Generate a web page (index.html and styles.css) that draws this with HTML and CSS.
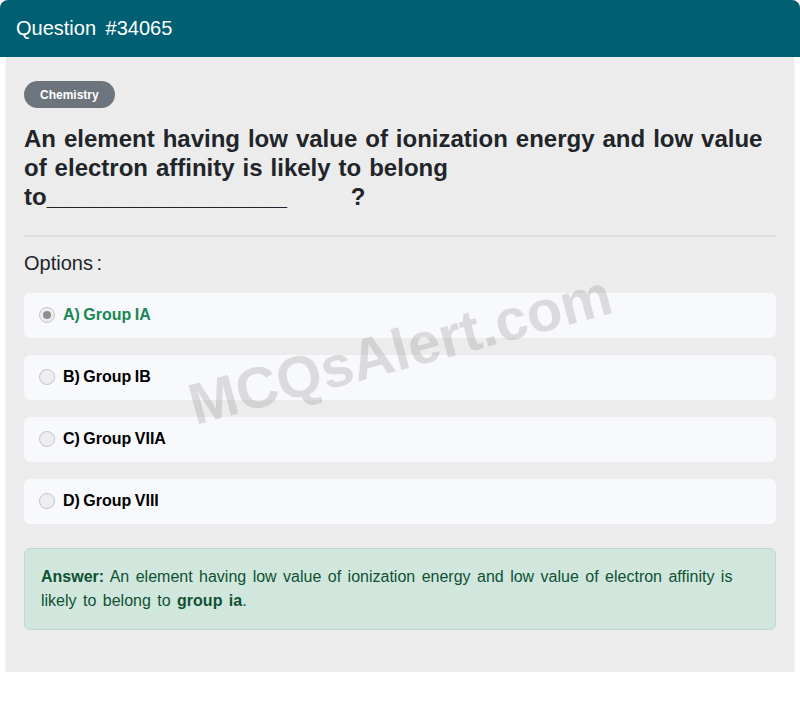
FILE: index.html
```html
<!DOCTYPE html>
<html>
<head>
<meta charset="utf-8">
<link rel="stylesheet" href="styles.css">
</head>
<body>
<div class="card">
  <div class="card-header">Question <span class="qnum">#34065</span></div>
  <div class="card-body">
    <span class="badge">Chemistry</span>
    <h2 class="question">An element having low value of ionization energy and low value of electron affinity is likely to belong to__________________&nbsp;&nbsp;&nbsp;&nbsp;&nbsp;&nbsp;&nbsp;&nbsp;?</h2>
    <hr class="divider">
    <div class="options-title">Options :</div>
    <div class="option correct"><span class="radio checked"></span>A) Group IA</div>
    <div class="option"><span class="radio"></span>B) Group IB</div>
    <div class="option"><span class="radio"></span>C) Group VIIA</div>
    <div class="option"><span class="radio"></span>D) Group VIII</div>
    <div class="answer"><strong>Answer:</strong> An element having low value of ionization energy and low value of electron affinity is likely to belong to <strong>group ia</strong>.</div>
    <div class="watermark">MCQsAlert.com</div>
  </div>
</div>
</body>
</html>
```
FILE: styles.css
```css
html, body {
  margin: 0;
  padding: 0;
  background: #ffffff;
  font-family: "Liberation Sans", Arial, sans-serif;
  color: #212529;
}
.card {
  width: 800px;
}
.card-header {
  height: 57px;
  box-sizing: border-box;
  background: #005f73;
  color: #ffffff;
  font-size: 20px;
  line-height: 24px;
  padding: 16px 16px 0;
  border-radius: 8px 8px 0 0;
}
.qnum {
  margin-left: 4px;
}
.card-body {
  position: relative;
  margin: 0 6px;
  background: #ececec;
  padding: 24px 18px 42px;
  overflow: hidden;
  box-shadow: 0 2px 4px rgba(0, 0, 0, 0.08);
}
.badge {
  display: inline-block;
  background: #6c757d;
  color: #ffffff;
  font-weight: bold;
  font-size: 12px;
  line-height: 15px;
  padding: 7px 16px 5px;
  border-radius: 14px;
}
.question {
  margin: 16px 0 0;
  font-size: 24px;
  line-height: 29px;
  font-weight: bold;
  word-spacing: 1.3px;
  color: #212529;
}
.divider {
  border: 0;
  border-top: 2px solid #dfdfdf;
  margin: 24px 0 14px;
}
.options-title {
  font-size: 20px;
  line-height: 24px;
  margin-bottom: 18px;
  word-spacing: -2px;
}
.option {
  display: flex;
  align-items: center;
  background: #f8f9fc;
  border-radius: 6px;
  height: 45px;
  padding: 0 15px 1px;
  box-sizing: border-box;
  margin-bottom: 17px;
  font-size: 16px;
  font-weight: bold;
  color: #000000;
  word-spacing: -1px;
}
.option.correct {
  color: #198754;
}
.radio {
  width: 14px;
  height: 14px;
  border: 1px solid #c4c4c4;
  border-radius: 50%;
  background: #eeeeee;
  margin-right: 8px;
  display: flex;
  align-items: center;
  justify-content: center;
  flex: none;
}
.radio.checked::after {
  content: "";
  width: 8px;
  height: 8px;
  border-radius: 50%;
  background: #8e8e8e;
}
.answer {
  margin-top: 24px;
  background: #d1e7dd;
  border: 1px solid #badbcc;
  border-radius: 6px;
  color: #0f5132;
  font-size: 16px;
  line-height: 24px;
  padding: 16px;
  word-spacing: 2px;
}
.watermark {
  position: absolute;
  left: 394px;
  top: 292px;
  transform: translate(-50%, -50%) rotate(-15deg);
  font-size: 58px;
  font-weight: bold;
  color: rgba(140, 140, 140, 0.27);
  white-space: nowrap;
  pointer-events: none;
}
```
